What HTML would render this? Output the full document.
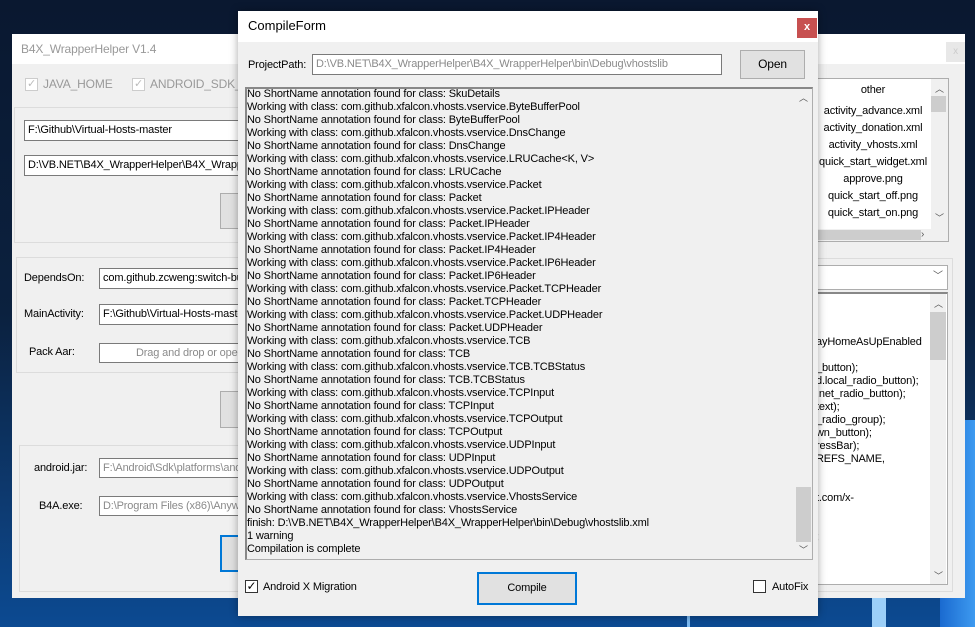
<!DOCTYPE html>
<html><head><meta charset="utf-8"><style>
*{box-sizing:border-box;margin:0;padding:0}
body{width:975px;height:627px;overflow:hidden;position:relative;font-family:"Liberation Sans",sans-serif;font-size:11px;letter-spacing:-0.15px;color:#000;
background:linear-gradient(180deg,#0a1830 0%,#0b213f 50%,#0d3a70 80%,#0c4a92 100%)}
.a{position:absolute}
.tb{position:absolute;background:#fff;border:1px solid #7a7a7a;height:21px;padding:3px 3px;white-space:nowrap;overflow:hidden;line-height:13px}
.gray{color:#8a8a8a}
.btn{position:absolute;background:#e1e1e1;border:1px solid #adadad}
.grp{position:absolute;border:1px solid #dcdcdc}
.cb{position:absolute;width:13px;height:13px;border:1px solid #333;background:#fff}
.t{position:absolute;white-space:nowrap;line-height:13px}
</style></head><body>
<div class="a" style="left:940px;top:420px;width:35px;height:207px;background:linear-gradient(90deg,#1a6ad0,#3d9af0)"></div>
<div class="a" style="left:687px;top:590px;width:3px;height:37px;background:#7ab8f0"></div>
<div class="a" style="left:872px;top:590px;width:14px;height:37px;background:#9ccff8"></div>

<!-- back window -->
<div class="a" style="left:12px;top:34px;width:953px;height:564px;background:#f0f0f0">
 <div class="a" style="left:0;top:0;width:953px;height:30px;background:#fff"></div>
 <div class="t" style="left:9px;top:9px;color:#999;font-size:12px">B4X_WrapperHelper V1.4</div>
 <div class="a" style="left:934px;top:8px;width:19px;height:20px;background:#e8e8e8;color:#ccc;text-align:center;font-size:10px;line-height:20px">x</div>
</div>
<div class="cb" style="left:25px;top:78px;border-color:#ccc;color:#bbb;font-size:11px;line-height:11px;text-align:center">✓</div>
<div class="t" style="left:43px;top:78px;color:#999;font-size:12px">JAVA_HOME</div>
<div class="cb" style="left:132px;top:78px;border-color:#ccc;color:#bbb;font-size:11px;line-height:11px;text-align:center">✓</div>
<div class="t" style="left:150px;top:78px;color:#999;font-size:12px">ANDROID_SDK_H</div>
<div class="grp" style="left:14px;top:107px;width:240px;height:136px"></div>
<div class="tb" style="left:24px;top:120px;width:230px">F:\Github\Virtual-Hosts-master</div>
<div class="tb" style="left:24px;top:155px;width:230px">D:\VB.NET\B4X_WrapperHelper\B4X_WrapperHelper</div>
<div class="btn" style="left:220px;top:193px;width:40px;height:36px"></div>
<div class="grp" style="left:16px;top:257px;width:240px;height:116px"></div>
<div class="t" style="left:24px;top:272px">DependsOn:</div>
<div class="tb" style="left:99px;top:268px;width:150px">com.github.zcweng:switch-button</div>
<div class="t" style="left:24px;top:308px">MainActivity:</div>
<div class="tb" style="left:99px;top:304px;width:150px">F:\Github\Virtual-Hosts-master</div>
<div class="t" style="left:29px;top:346px">Pack Aar:</div>
<div class="tb gray" style="left:99px;top:343px;width:150px;height:20px;padding-left:36px">Drag and drop or open</div>
<div class="btn" style="left:220px;top:391px;width:40px;height:37px"></div>
<div class="grp" style="left:19px;top:445px;width:240px;height:147px"></div>
<div class="t" style="left:34px;top:462px">android.jar:</div>
<div class="tb gray" style="left:99px;top:458px;width:150px;height:20px">F:\Android\Sdk\platforms\android</div>
<div class="t" style="left:39px;top:500px">B4A.exe:</div>
<div class="tb gray" style="left:99px;top:496px;width:150px;height:20px">D:\Program Files (x86)\Anywhere</div>
<div class="btn" style="left:220px;top:535px;width:40px;height:37px;border:2px solid #0078d7"></div>

<!-- right pane -->
<div class="grp" style="left:800px;top:258px;width:153px;height:334px"></div>
<div class="a" style="left:800px;top:78px;width:149px;height:164px;background:#fff;border:1px solid #adadad"></div>
<div class="t" style="left:818px;top:84px;width:110px;text-align:center">other</div>
<div class="t" style="left:818px;top:105px;width:110px;text-align:center">activity_advance.xml</div>
<div class="t" style="left:818px;top:122px;width:110px;text-align:center">activity_donation.xml</div>
<div class="t" style="left:818px;top:139px;width:110px;text-align:center">activity_vhosts.xml</div>
<div class="t" style="left:818px;top:156px;width:110px;text-align:center">quick_start_widget.xml</div>
<div class="t" style="left:818px;top:173px;width:110px;text-align:center">approve.png</div>
<div class="t" style="left:818px;top:190px;width:110px;text-align:center">quick_start_off.png</div>
<div class="t" style="left:818px;top:207px;width:110px;text-align:center">quick_start_on.png</div>
<div class="a" style="left:931px;top:79px;width:17px;height:150px;background:#f0f0f0"></div>
<div class="a" style="left:931px;top:96px;width:15px;height:16px;background:#cdcdcd"></div>
<div class="t" style="left:935px;top:83px;font-size:9px;color:#555">︿</div>
<div class="t" style="left:935px;top:212px;font-size:9px;color:#555">﹀</div>
<div class="a" style="left:801px;top:229px;width:147px;height:12px;background:#f0f0f0"></div>
<div class="a" style="left:801px;top:230px;width:120px;height:10px;background:#cdcdcd"></div>
<div class="t" style="left:921px;top:228px;font-size:10px;color:#555">›</div>
<div class="a" style="left:800px;top:265px;width:148px;height:25px;background:#fff;border:1px solid #adadad"></div>
<div class="t" style="left:933px;top:270px;font-size:10px;color:#555">﹀</div>
<div class="a" style="left:800px;top:292px;width:148px;height:293px;background:#fff;border:1px solid #adadad;border-top:2px solid #888"></div>
<div class="a" style="left:930px;top:294px;width:16px;height:290px;background:#f0f0f0"></div>
<div class="a" style="left:930px;top:312px;width:16px;height:48px;background:#cdcdcd"></div>
<div class="t" style="left:934px;top:298px;font-size:9px;color:#555">︿</div>
<div class="t" style="left:934px;top:570px;font-size:9px;color:#555">﹀</div>
<div class="t" style="left:816px;top:336px">ayHomeAsUpEnabled</div>
<div class="t" style="left:816px;top:362px">_button);</div>
<div class="t" style="left:816px;top:375px">d.local_radio_button);</div>
<div class="t" style="left:816px;top:388px">.net_radio_button);</div>
<div class="t" style="left:816px;top:401px">text);</div>
<div class="t" style="left:816px;top:414px">_radio_group);</div>
<div class="t" style="left:816px;top:427px">wn_button);</div>
<div class="t" style="left:816px;top:440px">ressBar);</div>
<div class="t" style="left:816px;top:453px">REFS_NAME,</div>
<div class="t" style="left:816px;top:492px">t.com/x-</div>
<div class="t" style="left:816px;top:531px">;</div>

<!-- compile form -->
<div class="a" style="left:238px;top:11px;width:580px;height:605px;background:#f0f0f0;box-shadow:0 0 8px rgba(0,0,0,.35)">
 <div class="a" style="left:0;top:0;width:580px;height:31px;background:#fff"></div>
 <div class="t" style="left:10px;top:8px;font-size:13px;letter-spacing:0">CompileForm</div>
 <div class="a" style="left:559px;top:7px;width:20px;height:20px;background:#c75050;color:#fff;text-align:center;font-size:11px;line-height:19px;font-weight:bold">x</div>
 <div class="t" style="left:10px;top:48px">ProjectPath:</div>
 <div class="tb gray" style="left:74px;top:43px;width:410px">D:\VB.NET\B4X_WrapperHelper\B4X_WrapperHelper\bin\Debug\vhostslib</div>
 <div class="btn" style="left:502px;top:39px;width:65px;height:29px;text-align:center;line-height:27px;font-size:12px">Open</div>
 <div class="a" style="left:7px;top:76px;width:568px;height:473px;border:1px solid #adadad;border-top:2px solid #888;border-left:2px solid #888"></div>
 <div class="a" style="left:557px;top:78px;width:17px;height:470px;background:#f0f0f0"></div>
 <div class="a" style="left:558px;top:476px;width:15px;height:55px;background:#cdcdcd"></div>
 <div class="t" style="left:561px;top:81px;font-size:9px;color:#555">︿</div>
 <div class="t" style="left:561px;top:533px;font-size:9px;color:#555">﹀</div>
 <div class="t" style="left:9px;top:77px;line-height:13px">No ShortName annotation found for class: SkuDetails<br>Working with class: com.github.xfalcon.vhosts.vservice.ByteBufferPool<br>No ShortName annotation found for class: ByteBufferPool<br>Working with class: com.github.xfalcon.vhosts.vservice.DnsChange<br>No ShortName annotation found for class: DnsChange<br>Working with class: com.github.xfalcon.vhosts.vservice.LRUCache&lt;K, V&gt;<br>No ShortName annotation found for class: LRUCache<br>Working with class: com.github.xfalcon.vhosts.vservice.Packet<br>No ShortName annotation found for class: Packet<br>Working with class: com.github.xfalcon.vhosts.vservice.Packet.IPHeader<br>No ShortName annotation found for class: Packet.IPHeader<br>Working with class: com.github.xfalcon.vhosts.vservice.Packet.IP4Header<br>No ShortName annotation found for class: Packet.IP4Header<br>Working with class: com.github.xfalcon.vhosts.vservice.Packet.IP6Header<br>No ShortName annotation found for class: Packet.IP6Header<br>Working with class: com.github.xfalcon.vhosts.vservice.Packet.TCPHeader<br>No ShortName annotation found for class: Packet.TCPHeader<br>Working with class: com.github.xfalcon.vhosts.vservice.Packet.UDPHeader<br>No ShortName annotation found for class: Packet.UDPHeader<br>Working with class: com.github.xfalcon.vhosts.vservice.TCB<br>No ShortName annotation found for class: TCB<br>Working with class: com.github.xfalcon.vhosts.vservice.TCB.TCBStatus<br>No ShortName annotation found for class: TCB.TCBStatus<br>Working with class: com.github.xfalcon.vhosts.vservice.TCPInput<br>No ShortName annotation found for class: TCPInput<br>Working with class: com.github.xfalcon.vhosts.vservice.TCPOutput<br>No ShortName annotation found for class: TCPOutput<br>Working with class: com.github.xfalcon.vhosts.vservice.UDPInput<br>No ShortName annotation found for class: UDPInput<br>Working with class: com.github.xfalcon.vhosts.vservice.UDPOutput<br>No ShortName annotation found for class: UDPOutput<br>Working with class: com.github.xfalcon.vhosts.vservice.VhostsService<br>No ShortName annotation found for class: VhostsService<br>finish: D:\VB.NET\B4X_WrapperHelper\B4X_WrapperHelper\bin\Debug\vhostslib.xml<br>1 warning<br>Compilation is complete</div>
 <div class="cb" style="left:7px;top:569px;font-size:12px;line-height:11px;text-align:center">✓</div>
 <div class="t" style="left:25px;top:570px">Android X Migration</div>
 <div class="btn" style="left:239px;top:561px;width:100px;height:33px;border:2px solid #0078d7;text-align:center;line-height:29px">Compile</div>
 <div class="cb" style="left:515px;top:569px"></div>
 <div class="t" style="left:534px;top:570px">AutoFix</div>
</div>
</body></html>
